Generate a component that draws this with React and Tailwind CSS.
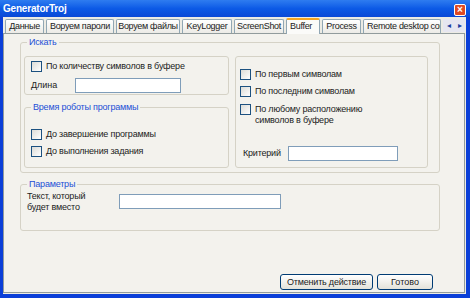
const font = { fontFamily: "'Liberation Sans', Arial, sans-serif" };

const tabs = [
  { t: "Данные", w: "w-[39px]" },
  { t: "Воруем пароли", w: "w-[68px]" },
  { t: "Воруем файлы", w: "w-[64px]" },
  { t: "KeyLogger", w: "w-[50px]" },
  { t: "ScreenShot", w: "w-[50px]" },
  { t: "Buffer", w: "w-[34px]" },
  { t: "Process", w: "w-[39px]" },
  { t: "Remote desktop con", w: "w-[78px]" },
];

function Check({ children, className = "" }) {
  return (
    <div className={`flex items-start gap-[4px] ${className}`}>
      <span className="w-[11px] h-[11px] shrink-0 border border-[#1c5180] bg-gradient-to-br from-[#dcdcd7] to-white" />
      <span className="leading-[11px] tracking-[-0.2px]">{children}</span>
    </div>
  );
}

function Group({ legend, className = "", children }) {
  return (
    <div className={`relative border border-[#d5d2c6] rounded-[3px] ${className}`}>
      {legend && (
        <span className="absolute -top-[7px] left-[6px] px-[2px] bg-[#f3f2ed] text-[#1d4fd6] leading-[12px] tracking-[-0.2px]">{legend}</span>
      )}
      {children}
    </div>
  );
}

function Field({ className = "" }) {
  return <div className={`h-[15px] border border-[#7f9db9] bg-white ${className}`} />;
}

export default function App() {
  return (
    <div style={font} className="w-[470px] h-[298px] flex flex-col bg-[#0a3fd8] text-[9px] text-[#222] overflow-hidden">
      {/* title bar */}
      <div className="h-[17px] shrink-0 flex items-center justify-between pl-[3px] pr-[4px] bg-gradient-to-b from-[#2e7cf0] via-[#0c5ae6] to-[#0a48d6]">
        <span className="text-white font-bold text-[10px] leading-none tracking-[-0.2px]">GeneratorTroj</span>
        <span className="w-[12px] h-[12px] mt-[3px] rounded-[2px] bg-[#e04a22] border border-white flex items-center justify-center text-white text-[10px] leading-none font-bold">×</span>
      </div>
      <div className="flex-1 flex flex-col ml-[3px] mr-[4px] mb-[4px] bg-[#ecebe4]">
        {/* tabs */}
        <div className="h-[15px] mt-[1px] pl-[2px] flex items-end gap-[2px] relative">
          {tabs.map(({ t, w }) => {
            const sel = t === "Buffer";
            return (
              <div
                key={t}
                className={`${w} shrink-0 overflow-hidden text-center border border-[#91a7b4] border-b-0 rounded-t-[2px] whitespace-nowrap tracking-[-0.3px] ${
                  sel ? "h-[16px] leading-[13px] bg-[#fbfbf9] border-t-2 border-t-[#f5a623] -mb-[1px] z-10" : "h-[14px] leading-[13px] bg-gradient-to-b from-white to-[#ecebe6]"
                }`}
              >
                {sel || t.startsWith("Remote") ? <span className="block px-[3px] text-left">{t}</span> : t}
              </div>
            );
          })}
          <div className="mb-[1px] w-[22px] h-[13px] shrink-0 flex items-center justify-around text-[#1b3fa0] text-[8px] bg-[#e6e6f0]">
            <span>◂</span><span>▸</span>
          </div>
        </div>
        {/* page */}
        <div className="flex-1 flex flex-col bg-[#f3f2ed] border border-[#919b9c] mr-[1px] mb-[1px] pl-[16px] pr-[24px] pt-[8px]">
          <Group legend="Искать" className="h-[131px] pl-[3px] pr-[11px] pt-[13px] flex gap-[6px]">
            <div className="w-[205px] flex flex-col gap-[12px]">
              <Group className="h-[39px] pl-[6px] pt-[4px]">
                <Check>По количеству символов в буфере</Check>
                <div className="flex items-center mt-[6px]">
                  <span className="w-[44px]">Длина</span>
                  <Field className="w-[106px]" />
                </div>
              </Group>
              <Group legend="Время роботы программы" className="h-[61px] pl-[6px] pt-[21px] flex flex-col gap-[6px]">
                <Check>До завершение программы</Check>
                <Check>До выполнения задания</Check>
              </Group>
            </div>
            <Group className="h-[112px] flex-1 pl-[4px] pt-[12px]">
              <Check>По первым символам</Check>
              <Check className="mt-[6px]">По последним символам</Check>
              <Check className="mt-[7px] items-center">По любому расположению<br />символов в буфере</Check>
              <div className="flex items-center mt-[20px] pl-[3px]">
                <span className="w-[45px] tracking-[-0.2px]">Критерий</span>
                <Field className="w-[110px]" />
              </div>
            </Group>
          </Group>
          <Group legend="Параметры" className="mt-[11px] h-[47px] pl-[6px] pt-[6px] flex items-start">
            <span className="w-[92px] leading-[11px] tracking-[-0.2px]">Текст, который<br />будет вместо</span>
            <Field className="w-[162px] mt-[3px]" />
          </Group>
          <div className="mt-auto mb-[2px] flex justify-end gap-[4px] mr-[7px]">
            <button className="w-[93px] h-[16px] border border-[#003c74] rounded-[3px] bg-gradient-to-b from-white to-[#e3e2da] leading-none whitespace-nowrap tracking-[-0.2px]">Отменить действие</button>
            <button className="w-[56px] h-[16px] border border-[#003c74] rounded-[3px] bg-gradient-to-b from-white to-[#e3e2da] leading-none whitespace-nowrap">Готово</button>
          </div>
        </div>
      </div>
    </div>
  );
}
